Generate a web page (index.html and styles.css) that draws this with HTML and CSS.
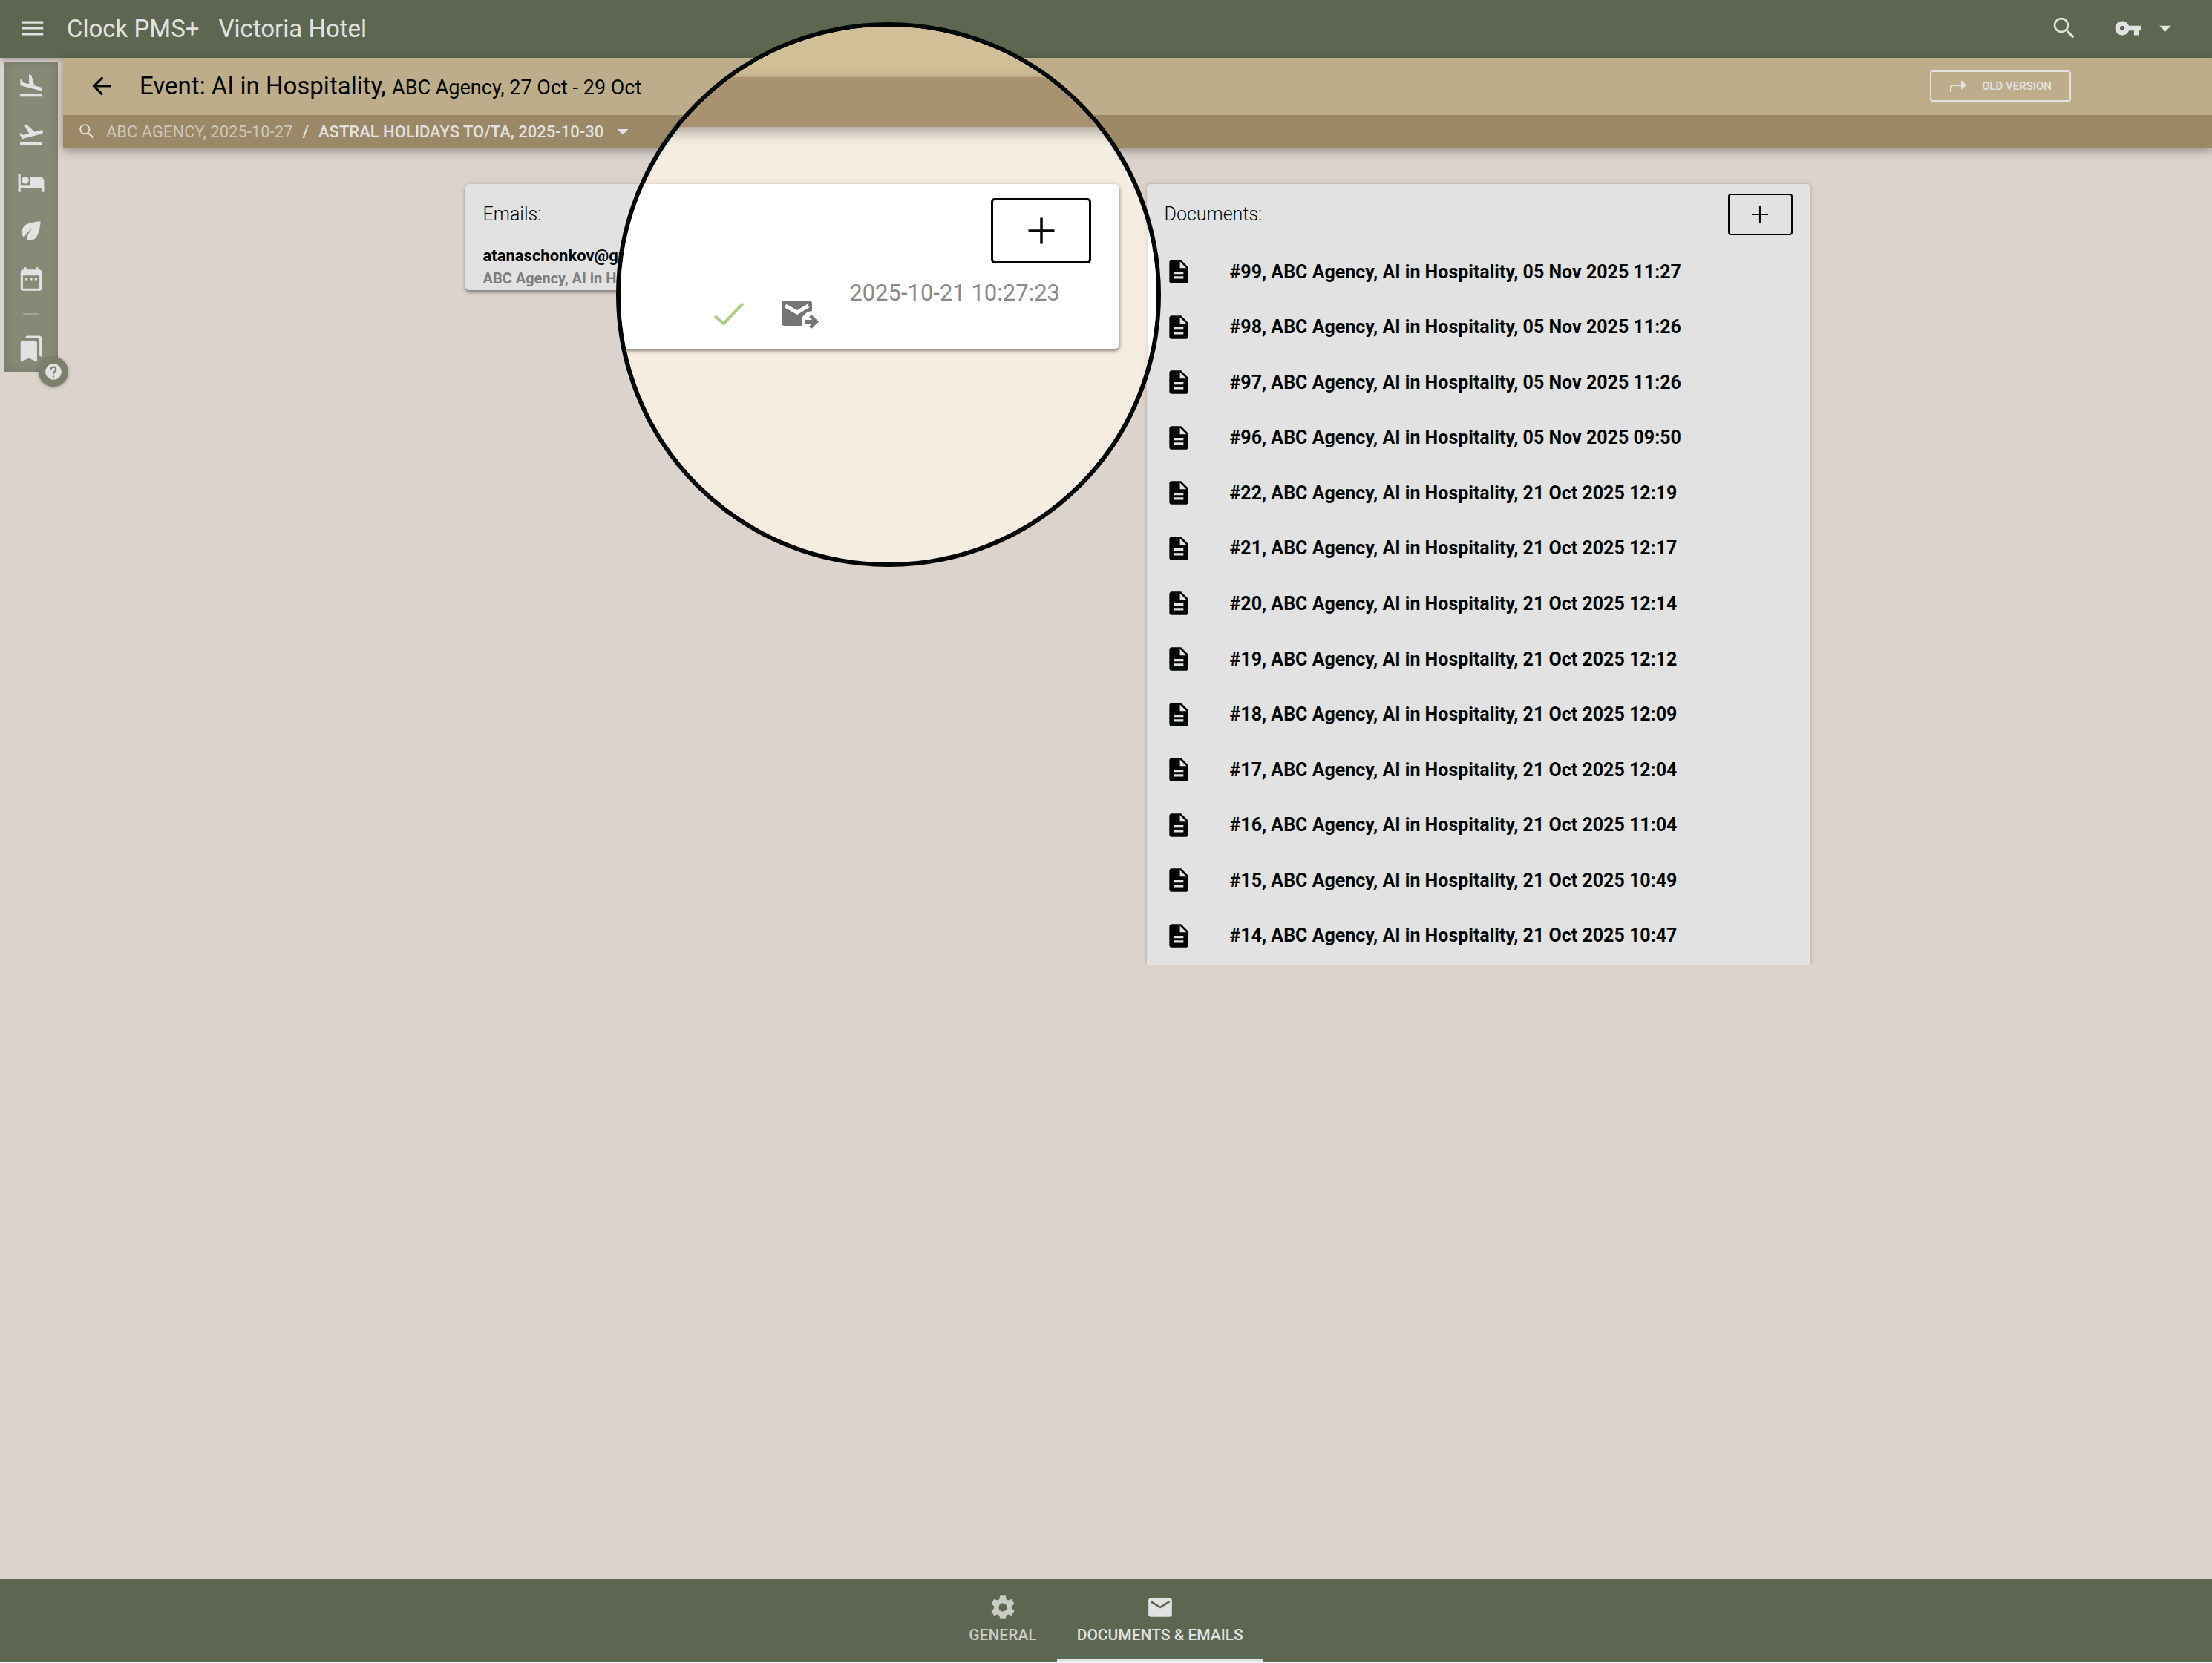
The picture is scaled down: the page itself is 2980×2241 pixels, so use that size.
FILE: index.html
```html
<!DOCTYPE html>
<html lang="en">
<head>
    <meta charset="UTF-8">
    <meta name="viewport" content="width=device-width, initial-scale=1.0">
    <title>Clock PMS+ Victoria Hotel</title>
    <link rel="stylesheet" href="styles.css">
</head>
<body>
    <svg class="sprite" aria-hidden="true">
        <symbol id="menu" viewBox="0 0 24 24"><path d="M3 18h18v-2H3v2zm0-5h18v-2H3v2zm0-7v2h18V6H3z"/></symbol>
        <symbol id="search" viewBox="0 0 24 24"><path d="M15.5 14h-.79l-.28-.27C15.41 12.59 16 11.11 16 9.5 16 5.91 13.09 3 9.5 3S3 5.91 3 9.5 5.91 16 9.5 16c1.61 0 3.09-.59 4.23-1.57l.27.28v.79l5 4.99L20.49 19l-4.99-5zm-6 .3c-2.650 0-4.800-2.150-4.800-4.800s2.150-4.800 4.800-4.800 4.800 2.150 4.800 4.800-2.150 4.800-4.800 4.800z"/></symbol>
        <symbol id="key" viewBox="0 0 24 24"><path d="M12.65 10C11.83 7.67 9.61 6 7 6c-3.31 0-6 2.69-6 6s2.69 6 6 6c2.61 0 4.83-1.67 5.65-4H17v4h4v-4h2v-4H12.65zM7 14c-1.1 0-2-.9-2-2s.9-2 2-2 2 .9 2 2-.9 2-2 2z"/></symbol>
        <symbol id="caret" viewBox="0 0 24 24"><path d="M7 10l5 5 5-5z"/></symbol>
        <symbol id="back" viewBox="0 0 24 24"><path d="M20 11H7.83l5.59-5.59L12 4l-8 8 8 8 1.41-1.41L7.83 13H20v-2z"/></symbol>
        <symbol id="redo" viewBox="0 0 24 18"><path d="M1 17V11Q1 7 5 7H16V1L23 7.500 16 14V9H6Q3 9 3 12V17z"/></symbol>
        <symbol id="landing" viewBox="0 0 24 24"><path d="M2.5 19h19v2h-19zm7.180-5.730l4.350 1.160 5.310 1.420c.8.210 1.620-.26 1.840-1.060.21-.8-.26-1.620-1.060-1.840l-5.310-1.420-2.760-9.020L10.120 2v8.280L5.150 8.950l-.93-2.320-1.450-.39v5.170l1.600.43 5.310 1.430z"/></symbol>
        <symbol id="takeoff" viewBox="0 0 24 24"><path d="M2.5 19h19v2h-19zm19.570-9.360c-.21-.8-1.040-1.280-1.840-1.060L14.920 10l-6.900-6.430-1.930.51 4.140 7.170-4.970 1.330-1.970-1.540-1.450.39 1.820 3.160.77 1.330 1.600-.43 5.310-1.420 4.350-1.160L21 11.490c.81-.23 1.280-1.050 1.070-1.850z"/></symbol>
        <symbol id="bed" viewBox="0 0 24 24"><path d="M7 13c1.660 0 3-1.340 3-3S8.660 7 7 7s-3 1.340-3 3 1.340 3 3 3zm12-6h-8v7H3V5H1v15h2v-3h18v3h2v-9c0-2.210-1.790-4-4-4z"/></symbol>
        <symbol id="leaf" viewBox="0 0 24 24"><path d="M6.050 8.050c-2.730 2.730-2.730 7.150-.02 9.880 1.470-3.400 4.090-6.240 7.360-7.930-2.770 2.340-4.710 5.610-5.390 9.320 2.600 1.230 5.800.78 7.950-1.370C19.430 14.470 20 4 20 4S9.530 4.570 6.050 8.050z"/></symbol>
        <symbol id="calendar" viewBox="0 0 24 24"><path d="M9 11H7v2h2v-2zm4 0h-2v2h2v-2zm4 0h-2v2h2v-2zm2-7h-1V2h-2v2H8V2H6v2H5c-1.110 0-1.990.9-1.990 2L3 20c0 1.100.89 2 2 2h14c1.100 0 2-.9 2-2V6c0-1.100-.9-2-2-2zm0 16H5V9h14v11z"/></symbol>
        <symbol id="bookmarks" viewBox="0 0 24 24"><path d="M19 18l2 1V3c0-1.100-.9-2-2-2H8.990C7.890 1 7 1.900 7 3h10c1.100 0 2 .9 2 2v13zM15 5H5c-1.100 0-2 .9-2 2v16l7-3 7 3V7c0-1.100-.9-2-2-2z"/></symbol>
        <symbol id="help" viewBox="0 0 24 24"><path d="M12 2C6.480 2 2 6.480 2 12s4.480 10 10 10 10-4.480 10-10S17.520 2 12 2zm1 17h-2v-2h2v2zm2.070-7.750l-.9.920C13.450 12.900 13 13.500 13 15h-2v-.5c0-1.100.45-2.100 1.170-2.830l1.240-1.260c.37-.36.590-.86.590-1.410 0-1.100-.9-2-2-2s-2 .9-2 2H8c0-2.210 1.790-4 4-4s4 1.790 4 4c0 .88-.36 1.680-.93 2.250z"/></symbol>
        <symbol id="plus" viewBox="0 0 24 24"><path d="M19 12.700h-6.300V19h-1.400v-6.300H5v-1.400h6.300V5h1.400v6.300H19z"/></symbol>
        <symbol id="doc" viewBox="0 0 24 24"><path d="M14 2H6c-1.100 0-1.990.9-1.990 2L4 20c0 1.100.89 2 1.990 2H18c1.100 0 2-.9 2-2V8l-6-6zm2 16H8v-2h8v2zm0-4H8v-2h8v2zm-3-5V3.500L18.500 9H13z"/></symbol>
        <symbol id="check" viewBox="0 0 42 32"><path d="M2 19l12 10L40 2" fill="none" stroke="currentColor" stroke-width="4"/></symbol>
        <symbol id="forward" viewBox="0 0 51 38"><path d="M4 0H37a4 4 0 0 1 4 4V14C33 15 27 20 27 28V34H4a4 4 0 0 1-4-4V4a4 4 0 0 1 4-4z"/><path d="M5 7l16 9 15-9" fill="none" stroke="#fff" stroke-width="5"/><path d="M31 26h10l-4-4 3-3 10 9.500-10 9.500-3-3 4-4H31z"/></symbol>
        <symbol id="gear" viewBox="0 0 24 24"><path d="M19.430 12.980c.04-.32.070-.64.070-.98s-.03-.66-.07-.98l2.110-1.650c.19-.15.240-.42.120-.64l-2-3.460c-.12-.22-.39-.3-.61-.22l-2.490 1c-.52-.4-1.080-.73-1.690-.98l-.38-2.650C14.460 2.180 14.250 2 14 2h-4c-.25 0-.46.180-.49.420l-.38 2.650c-.61.250-1.170.590-1.690.980l-2.490-1c-.23-.09-.49 0-.61.220l-2 3.460c-.13.220-.07.490.12.640l2.110 1.650c-.04.320-.07.650-.07.980s.03.660.07.980l-2.110 1.650c-.19.150-.24.420-.12.640l2 3.460c.12.220.39.300.61.220l2.490-1c.52.400 1.080.730 1.690.980l.38 2.650c.03.240.24.420.49.420h4c.25 0 .46-.18.490-.42l.38-2.650c.61-.25 1.170-.59 1.690-.98l2.490 1c.23.090.49 0 .61-.22l2-3.460c.12-.22.070-.49-.12-.64l-2.110-1.650zM12 15.500c-1.930 0-3.500-1.570-3.500-3.500s1.570-3.500 3.500-3.500 3.500 1.570 3.500 3.500-1.570 3.500-3.500 3.500z"/></symbol>
        <symbol id="mail" viewBox="0 0 24 24"><path d="M20 4H4c-1.100 0-1.990.9-1.990 2L2 18c0 1.100.9 2 2 2h16c1.100 0 2-.9 2-2V6c0-1.100-.9-2-2-2zm0 4l-8 5-8-5V6l8 5 8-5v2z"/></symbol>
    </svg>

    <header class="topbar">
        <button class="icon-btn" aria-label="Menu"><svg class="icon"><use href="#menu"/></svg></button>
        <span class="brand">Clock PMS+</span>
        <span class="hotel">Victoria Hotel</span>
        <div class="top-actions">
            <button class="icon-btn" aria-label="Search"><svg class="icon"><use href="#search"/></svg></button>
            <button class="icon-btn user-btn" aria-label="Account"><svg class="icon"><use href="#key"/></svg><svg class="icon"><use href="#caret"/></svg></button>
        </div>
    </header>

    <div class="layout">
        <aside class="side">
            <nav class="rail" aria-label="Shortcuts">
                <a href="#arrivals" aria-label="Arrivals"><svg class="icon"><use href="#landing"/></svg></a>
                <a href="#departures" aria-label="Departures"><svg class="icon"><use href="#takeoff"/></svg></a>
                <a href="#rooms" aria-label="Rooms"><svg class="icon"><use href="#bed"/></svg></a>
                <a href="#housekeeping" aria-label="Housekeeping"><svg class="icon"><use href="#leaf"/></svg></a>
                <a href="#planner" aria-label="Calendar"><svg class="icon"><use href="#calendar"/></svg></a>
                <hr>
                <a href="#saved" aria-label="Bookmarks"><svg class="icon"><use href="#bookmarks"/></svg></a>
                <button class="help" aria-label="Help"><svg class="icon-small"><use href="#help"/></svg></button>
            </nav>
        </aside>

        <div class="page">
            <div class="page-head">
                <div class="title-row">
                    <button class="icon-btn" aria-label="Back"><svg class="icon"><use href="#back"/></svg></button>
                    <h1>Event: AI in Hospitality, <small>ABC Agency, 27 Oct - 29 Oct</small></h1>
                    <button class="old-version"><svg class="redo"><use href="#redo"/></svg>OLD VERSION</button>
                </div>
                <nav class="crumbs" aria-label="Recent">
                    <svg class="icon-small"><use href="#search"/></svg>
                    <a href="#abc" class="muted">ABC AGENCY, 2025-10-27</a>
                    <span class="slash">/</span>
                    <a href="#astral">ASTRAL HOLIDAYS TO/TA, 2025-10-30</a>
                    <button class="icon-btn" aria-label="More"><svg class="crumb-caret"><use href="#caret"/></svg></button>
                </nav>
            </div>

            <main class="columns">
                <section class="card">
                    <div class="card-head"><h2>Emails:</h2></div>
                    <div class="email">
                        <a href="#email" class="email-to">atanaschonkov@gmail.com</a>
                        <span class="email-sub">ABC Agency, AI in Hospitality</span>
                    </div>
                </section>

                <section class="card docs">
                    <div class="card-head">
                        <h2>Documents:</h2>
                        <button class="add" aria-label="Add document"><svg class="icon"><use href="#plus"/></svg></button>
                    </div>
                    <ul class="doc-list">
                        <li><a href="#d99"><svg class="icon"><use href="#doc"/></svg>#99, ABC Agency, AI in Hospitality, 05 Nov 2025 11:27</a></li>
                        <li><a href="#d98"><svg class="icon"><use href="#doc"/></svg>#98, ABC Agency, AI in Hospitality, 05 Nov 2025 11:26</a></li>
                        <li><a href="#d97"><svg class="icon"><use href="#doc"/></svg>#97, ABC Agency, AI in Hospitality, 05 Nov 2025 11:26</a></li>
                        <li><a href="#d96"><svg class="icon"><use href="#doc"/></svg>#96, ABC Agency, AI in Hospitality, 05 Nov 2025 09:50</a></li>
                        <li><a href="#d22"><svg class="icon"><use href="#doc"/></svg>#22, ABC Agency, AI in Hospitality, 21 Oct 2025 12:19</a></li>
                        <li><a href="#d21"><svg class="icon"><use href="#doc"/></svg>#21, ABC Agency, AI in Hospitality, 21 Oct 2025 12:17</a></li>
                        <li><a href="#d20"><svg class="icon"><use href="#doc"/></svg>#20, ABC Agency, AI in Hospitality, 21 Oct 2025 12:14</a></li>
                        <li><a href="#d19"><svg class="icon"><use href="#doc"/></svg>#19, ABC Agency, AI in Hospitality, 21 Oct 2025 12:12</a></li>
                        <li><a href="#d18"><svg class="icon"><use href="#doc"/></svg>#18, ABC Agency, AI in Hospitality, 21 Oct 2025 12:09</a></li>
                        <li><a href="#d17"><svg class="icon"><use href="#doc"/></svg>#17, ABC Agency, AI in Hospitality, 21 Oct 2025 12:04</a></li>
                        <li><a href="#d16"><svg class="icon"><use href="#doc"/></svg>#16, ABC Agency, AI in Hospitality, 21 Oct 2025 11:04</a></li>
                        <li><a href="#d15"><svg class="icon"><use href="#doc"/></svg>#15, ABC Agency, AI in Hospitality, 21 Oct 2025 10:49</a></li>
                        <li><a href="#d14"><svg class="icon"><use href="#doc"/></svg>#14, ABC Agency, AI in Hospitality, 21 Oct 2025 10:47</a></li>
                    </ul>
                </section>
            </main>
        </div>
    </div>

    <footer class="tabs">
        <a href="#general" class="tab"><svg class="icon"><use href="#gear"/></svg>GENERAL</a>
        <a href="#documents" class="tab active"><svg class="icon"><use href="#mail"/></svg>DOCUMENTS &amp; EMAILS</a>
    </footer>

    <!-- magnifier over the emails card -->
    <div class="lens">
        <div class="lens-title"></div>
        <div class="lens-crumbs"></div>
        <div class="lens-body">
            <div class="lens-card">
                <button class="lens-add" aria-label="Add email"><svg class="lens-plus"><use href="#plus"/></svg></button>
                <div class="lens-row">
                    <svg class="lens-check"><use href="#check"/></svg>
                    <svg class="lens-forward"><use href="#forward"/></svg>
                    <time>2025-10-21 10:27:23</time>
                </div>
            </div>
            <div class="lens-next"></div>
        </div>
    </div>
</body>
</html>
```
FILE: styles.css
```css
* {
    box-sizing: border-box;
}
body {
    margin: 0;
    min-height: 100vh;
    display: flex;
    flex-direction: column;
    position: relative;
    font-family: Roboto, sans-serif;
    background-color: #dcd3cd;
    color: #020606;
}
a {
    color: inherit;
    text-decoration: none;
}
button {
    font-family: inherit;
    color: inherit;
    cursor: pointer;
}
svg {
    display: block;
    flex: none;
    fill: currentColor;
}
.sprite {
    position: absolute;
    width: 0;
    height: 0;
}
.icon {
    width: 38px;
    height: 38px;
}
.icon-small {
    width: 26px;
    height: 26px;
}
.icon-btn {
    display: flex;
    padding: 0;
    border: none;
    background: none;
}

/* top bar */
.topbar {
    display: flex;
    align-items: center;
    height: 78px;
    padding: 0 44px 2px 25px;
    background-color: #5d6650;
    color: #e2e2e2;
    font-size: 33px;
    box-shadow: 0 2px 8px rgba(0,0,0,0.3);
}
.brand {
    margin-left: 27px;
}
.hotel {
    margin-left: 26px;
}
.top-actions {
    display: flex;
    gap: 48px;
    margin-left: auto;
}
.user-btn {
    gap: 12px;
}

/* left rail */
.layout {
    display: flex;
    flex: 1;
}
.side {
    width: 85px;
    padding: 6px;
    flex: none;
}
.rail {
    position: relative;
    display: flex;
    flex-direction: column;
    align-items: center;
    gap: 27px;
    width: 72px;
    padding: 13px 0 12px;
    background-color: #858976;
    color: #e2e2e2;
    box-shadow: inset 0 0 12px rgba(0,0,0,0.12);
}
.rail hr {
    width: 22px;
    height: 2px;
    margin: 0;
    border: none;
    background-color: #a3a598;
}
.help {
    position: absolute;
    right: -14px;
    bottom: -20px;
    display: flex;
    align-items: center;
    justify-content: center;
    width: 40px;
    height: 40px;
    padding: 0;
    border: none;
    border-radius: 50%;
    background-color: #7b7f6c;
    box-shadow: 0 1px 4px rgba(0,0,0,0.3);
}

/* page header */
.page {
    flex: 1;
    min-width: 0;
}
.page-head {
    position: relative;
    box-shadow: 0 4px 12px rgba(0,0,0,0.35);
}
.title-row {
    display: flex;
    align-items: center;
    height: 77px;
    padding: 0 190px 2px 33px;
    background-color: #bdad8b;
}
h1 {
    margin: 0 0 0 32px;
    font-size: 33px;
    font-weight: 400;
}
h1 small {
    font-size: 27px;
}
.old-version {
    display: flex;
    align-items: center;
    gap: 20px;
    height: 42px;
    margin-left: auto;
    padding: 0 24px;
    border: 2px solid #e2e2e2;
    border-radius: 4px;
    background: none;
    color: #e2e2e2;
    font-size: 15px;
    font-weight: 500;
}
.redo {
    width: 24px;
    height: 18px;
}
.crumbs {
    display: flex;
    align-items: center;
    height: 44px;
    padding-left: 19px;
    background-color: #9b8867;
    color: #e2e2e2;
    font-size: 22px;
    font-weight: 500;
}
.crumbs .muted {
    margin-left: 13px;
    color: #cec6ba;
    font-weight: 400;
}
.slash {
    margin: 0 13px;
}
.crumbs .icon-btn {
    margin-left: 8px;
}
.crumb-caret {
    width: 36px;
    height: 36px;
}

/* cards */
.columns {
    display: grid;
    grid-template-columns: 1fr 1fr;
    align-items: start;
    gap: 24px;
    max-width: 1812px;
    margin: 49px auto 0;
}
.card {
    border-radius: 5px;
    background-color: #e2e2e2;
    box-shadow: 0 3px 4px rgba(0,0,0,0.35), 0 0 6px rgba(150,110,70,0.25);
}
.card-head {
    display: flex;
    align-items: center;
    justify-content: space-between;
    height: 81px;
    padding: 0 24px;
}
h2 {
    margin: 0;
    font-size: 25px;
    font-weight: 300;
}
.add {
    display: flex;
    align-items: center;
    justify-content: center;
    width: 87px;
    height: 56px;
    padding: 0;
    border: 2px solid #020606;
    border-radius: 4px;
    background: none;
}
.email {
    display: flex;
    flex-direction: column;
    padding: 0 24px 2px;
}
.email-to {
    font-size: 22px;
    line-height: 32px;
    font-weight: 700;
}
.email-sub {
    color: #7d7d7d;
    font-size: 20px;
    line-height: 28px;
    font-weight: 700;
}
.docs {
    border-radius: 5px 5px 0 0;
    box-shadow: 0 0 5px rgba(100,60,30,0.35);
    clip-path: inset(-8px -8px 0 -8px);
}
.doc-list {
    display: grid;
    grid-auto-rows: 1fr;
    height: 971px;
    margin: 0;
    padding: 0 24px 2px;
    list-style: none;
    font-size: 25px;
    font-weight: 700;
}
.doc-list a {
    display: flex;
    align-items: center;
    gap: 50px;
    height: 100%;
}

/* bottom tabs */
.tabs {
    display: flex;
    justify-content: center;
    height: 113px;
    border-bottom: 2px solid #fff;
    background-color: #5d6650;
    color: #e2e2e2;
}
.tab {
    display: flex;
    flex-direction: column;
    align-items: center;
    gap: 6px;
    padding: 19px 27px 0;
    border-bottom: 3px solid transparent;
    font-size: 21px;
    line-height: 24px;
    font-weight: 500;
    color: #c9cbc5;
}
.tab.active {
    border-color: #e2e2e2;
    color: #e2e2e2;
}

/* magnifier */
.lens {
    position: absolute;
    left: 830px;
    top: 30px;
    display: flex;
    flex-direction: column;
    width: 734px;
    height: 734px;
    overflow: hidden;
    border: 6px solid #020606;
    border-radius: 50%;
    background-color: #f6ede2;
}
.lens-title {
    flex: none;
    height: 68px;
    background-color: #d1bf98;
}
.lens-crumbs {
    flex: none;
    height: 67px;
    background-color: #a99270;
    box-shadow: 0 6px 18px rgba(0,0,0,0.35);
}
.lens-body {
    display: flex;
    flex: 1;
    gap: 39px;
    padding-top: 77px;
}
.lens-card {
    display: flex;
    flex-direction: column;
    align-items: flex-end;
    flex: none;
    width: 672px;
    height: 222px;
    padding: 19px 38px 0 0;
    border-radius: 0 6px 6px 0;
    background-color: #fff;
    box-shadow: 0 3px 5px rgba(0,0,0,0.4), 0 0 8px rgba(150,110,70,0.2);
}
.lens-add {
    display: flex;
    align-items: center;
    justify-content: center;
    width: 135px;
    height: 88px;
    padding: 0;
    border: 3px solid #020606;
    border-radius: 5px;
    background: none;
}
.lens-plus {
    width: 60px;
    height: 60px;
}
.lens-row {
    display: flex;
    align-items: flex-end;
    gap: 40px;
    margin-top: 20px;
    padding-right: 42px;
}
.lens-row time {
    align-self: flex-start;
    color: #8a8a8a;
    font-size: 31px;
    line-height: 40px;
}
.lens-check {
    width: 42px;
    height: 32px;
    margin: 32px 10px 4px 0;
    color: #aecd87;
}
.lens-forward {
    width: 51px;
    height: 38px;
    color: #757575;
}
.lens-next {
    flex: 1;
    border-radius: 6px 0 0 0;
    background-color: #fff;
    box-shadow: 0 0 8px rgba(150,110,70,0.25);
}
```
